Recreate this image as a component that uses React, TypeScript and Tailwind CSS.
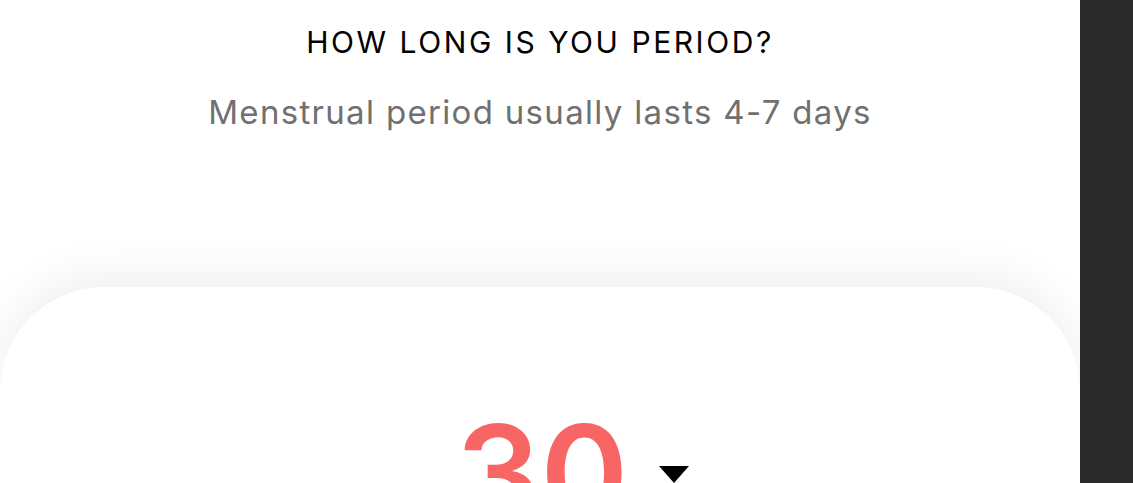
import { useState } from "react";

function DownMarker() {
  return (
    <svg width="30" height="17" viewBox="0 0 30 17" aria-hidden="true" className="absolute left-full top-[60px] ml-[31px]">
      <path d="M0 0H30L15 17Z" fill="#000" />
    </svg>
  );
}

function LengthCard({ value }: { value: number }) {
  return (
    <div className="flex flex-1 justify-center rounded-t-[104px] bg-white pt-[119px] shadow-[0_-10px_50px_rgba(0,0,0,0.07)]">
      <div className="relative ml-[4px] h-fit">
        <span className="block text-[133px] font-semibold leading-none text-[#f86565]">{value}</span>
        <DownMarker />
      </div>
    </div>
  );
}

export default function App() {
  const [days] = useState(30);

  return (
    <div className="flex h-screen overflow-hidden bg-white font-['Inter','Liberation_Sans',sans-serif]">
      <main className="flex w-[1080px] shrink-0 flex-col items-stretch">
        <h1 className="mt-[27px] text-center text-[30px] font-normal leading-[30px] tracking-[0.085em] text-black">
          HOW LONG IS YOU PERIOD?
        </h1>
        <p className="mt-[39px] text-center text-[33px] font-normal leading-[33px] tracking-[0.04em] text-[#707070]">
          Menstrual period usually lasts 4-7 days
        </p>
        <div className="mt-[158px] flex flex-1">
          <LengthCard value={days} />
        </div>
      </main>
      <aside className="flex-1 bg-[#2a2a2a]" />
    </div>
  );
}
